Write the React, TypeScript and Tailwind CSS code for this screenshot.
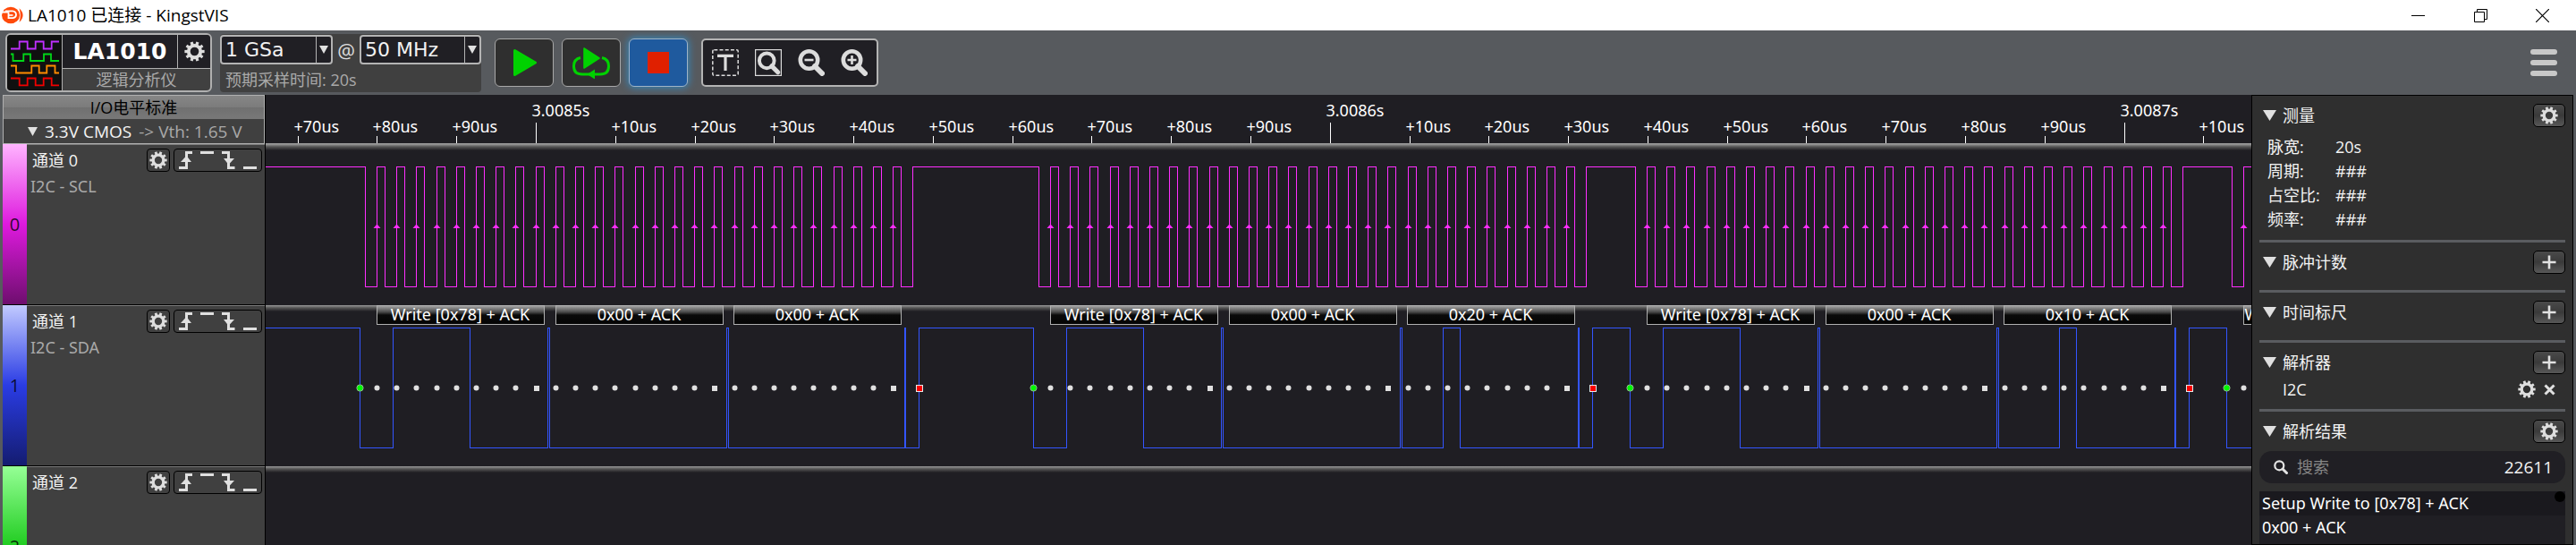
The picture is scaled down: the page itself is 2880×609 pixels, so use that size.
import React from "react";

const PLOT_LEFT = 297;
const HIGH = 25;
const LOW = 159;
const MID = 92;
const BIT = 22.2;
const px = (x: number) => Math.floor(x - PLOT_LEFT) + 0.5;

type Frame = { start: number; bytes: string[]; pulse?: [number, number]; clipped?: boolean };

const FRAMES: Frame[] = [
  { start: 421.5, bytes: ["Write [0x78] + ACK", "0x00 + ACK", "0x00 + ACK"] },
  { start: 1174.5, bytes: ["Write [0x78] + ACK", "0x00 + ACK", "0x20 + ACK"], pulse: [439, 458] },
  { start: 1841.5, bytes: ["Write [0x78] + ACK", "0x00 + ACK", "0x10 + ACK"], pulse: [461, 480] },
  { start: 2508.5, bytes: ["W"], clipped: true },
];

const BITS = Array.from({ length: 27 }, (_, i) => i);

function wave(edges: number[]) {
  let high = true;
  let d = `M0 ${HIGH + 0.5}`;
  for (const e of edges) {
    high = !high;
    d += `H${px(e)}V${(high ? HIGH : LOW) + 0.5}`;
  }
  return d + "H6000";
}

const sclEdges = FRAMES.flatMap(({ start }) => [
  start - 13,
  ...BITS.flatMap((i) => [start + i * BIT, start + i * BIT + 9]),
  start + 599.3,
]);

const sdaEdges = FRAMES.flatMap(({ start: s, pulse }) => [
  s - 19,
  s + 18,
  s + 104,
  s + 190.5,
  s + 192.5,
  s + 390.5,
  s + 392.5,
  ...(pulse ? [s + pulse[0], s + pulse[1]] : []),
  s + 590,
  s + 591,
  s + 606,
]);

function Gear({ className }: { className: string }) {
  return (
    <svg viewBox="-12 -12 24 24" className={className} aria-hidden="true">
      <circle r="7" fill="none" stroke="#dedede" strokeWidth="4" />
      {Array.from({ length: 10 }, (_, i) => (
        <rect key={i} x="-1.7" y="-11.6" width="3.4" height="4" fill="#dedede" transform={`rotate(${i * 36 + 18})`} />
      ))}
    </svg>
  );
}

function Plus() {
  return (
    <svg viewBox="0 0 16 16" className="size-4" aria-hidden="true">
      <path d="M8 0.5V15.5M0.5 8H15.5" stroke="#e2e2e2" strokeWidth="2.6" />
    </svg>
  );
}

function Magnifier({ sign }: { sign?: string }) {
  return (
    <g>
      <circle cx="12.5" cy="12" r="9.7" fill="none" stroke="#dcdcdc" strokeWidth="4.6" />
      <path d="M19 19L27 27" stroke="#dcdcdc" strokeWidth="6" strokeLinecap="round" />
      {sign && <path d={sign} stroke="#dcdcdc" strokeWidth="2.6" />}
    </g>
  );
}

function TitleBar() {
  return (
    <header className="flex h-[34px] shrink-0 items-center justify-between bg-white text-black">
      <div className="flex items-center gap-[5px] pl-[2px]">
        <svg viewBox="0 0 24 20" className="h-5 w-6" aria-hidden="true">
          <ellipse cx="10" cy="10" rx="10" ry="9.2" fill="#ff4a0a" />
          <path d="M19.5 2.2Q23.6 6 23.6 10T19.5 17.8Q22 10 19.5 2.2Z" fill="#ff4a0a" />
          <path d="M0 6.5H7.5M7.5 6.5V13.2H12.5Q16 12.6 16 9.6Q16 5.6 12 5.4H4" fill="none" stroke="#fff" strokeWidth="1.8" />
          <path d="M8 10H12.5" stroke="#fff" strokeWidth="1.6" />
        </svg>
        <h1 className="text-[19px] leading-6">LA1010 已连接 - KingstVIS</h1>
      </div>
      <div className="flex h-full">
        <button aria-label="最小化" className="flex w-[70px] items-center justify-center">
          <svg className="size-[15px]" viewBox="0 0 15 15"><path d="M0 7.5H15" stroke="#000" /></svg>
        </button>
        <button aria-label="还原" className="flex w-[70px] items-center justify-center">
          <svg className="size-[15px]" viewBox="0 0 15 15"><path d="M.5 3.5H11.5V14.5H.5ZM3.5 3.5V.5H14.5V11.5H11.5" fill="none" stroke="#000" /></svg>
        </button>
        <button aria-label="关闭" className="flex w-[72px] items-center justify-center pr-[3px]">
          <svg className="size-[15px]" viewBox="0 0 15 15"><path d="M0 0L15 15M15 0L0 15" stroke="#000" strokeWidth="1.2" /></svg>
        </button>
      </div>
    </header>
  );
}

function Drop({ label, options, className }: { label: string; options: string[]; className: string }) {
  return (
    <div className={`relative h-[33px] ${className}`}>
      <select
        aria-label={label}
        className="h-full w-full appearance-none rounded-[4px] border-2 border-[#b4b4b4] bg-[#201f24] pl-1 font-['DejaVu_Sans',sans-serif] text-[22px] leading-7 text-[#f2f2f2]"
      >
        {options.map((o) => <option key={o}>{o}</option>)}
      </select>
      <span className="pointer-events-none absolute inset-y-[2px] right-[2px] flex w-[17px] items-center justify-center border-l border-[#b4b4b4]">
        <svg viewBox="0 0 10 9" className="h-[9px] w-[10px]"><path d="M0 0H10L5 9Z" fill="#e0e0e0" /></svg>
      </span>
    </div>
  );
}

function Toolbar() {
  return (
    <div className="flex h-[72px] shrink-0 bg-[#575a5e] pl-[6px]">
      <div className="mt-[3px] flex h-[66px] w-[231px] overflow-hidden rounded-[6px] border-2 border-[#b0b0b0] bg-[#404040]">
        <svg viewBox="8 39 61 62" className="h-full w-[61px] shrink-0 bg-[#101010]" fill="none" strokeWidth="1.8" aria-hidden="true">
          <path d="M12 54.5H21.7V46.5H30.7V54.5H39.7V46.5H48.7V54.5H57.7V46.5H66" stroke="#c030ff" />
          <path d="M12 60.5H14.5V68H26.3V60.5H34V68H49V60.5H57V68H66" stroke="#00d818" />
          <path d="M12 73.5H18V81.5H35.3V73.5H43.7V81.5H52.3V73.5H61.5V81.5H66" stroke="#ff8c00" />
          <path d="M12 87.5H21.7V95.3H30.7V87.5H39.7V95.3H48.7V87.5H57.7V95.3H66" stroke="#f00000" />
        </svg>
        <div className="flex flex-1 flex-col border-l border-[#b0b0b0]">
          <div className="flex h-[38px] border-b border-[#b0b0b0] bg-[#201f24]">
            <button className="flex-1 text-center font-['DejaVu_Sans',sans-serif] text-[25px] leading-9 font-bold text-white">LA1010</button>
            <button aria-label="设备设置" className="flex w-[37px] items-center justify-center border-l border-[#b0b0b0]">
              <Gear className="size-[23px]" />
            </button>
          </div>
          <div className="flex flex-1 items-center justify-center text-[18px] leading-6 text-[#a9a9a9]">逻辑分析仪</div>
        </div>
      </div>

      <div className="mt-1 ml-[9px] h-[65px] w-[292px] rounded-[4px] bg-[#404040]">
        <div className="mt-px flex items-center justify-between">
          <Drop label="采样深度" options={["1 GSa", "500 MSa"]} className="w-[126px]" />
          <span className="text-[22px] leading-6 text-[#dcdcdc]">@</span>
          <Drop label="采样率" options={["50 MHz", "100 MHz"]} className="w-[136px]" />
        </div>
        <p className="mt-1 pl-[6px] text-[18px] leading-[26px] text-[#a9a9a9]">预期采样时间: 20s</p>
      </div>

      <div className="mt-[9px] ml-[15px] flex gap-[9px]">
        <button aria-label="开始采样" className="flex h-[54px] w-[66px] items-center justify-center rounded-[6px] border border-[#a8a8a8] bg-[#2f2f2f]">
          <svg viewBox="0 0 30 30" className="size-[30px]"><path d="M4.500 1.500L27.500 15L4.500 28.500Z" fill="#00d200" stroke="#00d200" strokeWidth="3" strokeLinejoin="round" /></svg>
        </button>
        <button aria-label="循环采样" className="flex h-[54px] w-[66px] items-center justify-center rounded-[6px] border border-[#a8a8a8] bg-[#2f2f2f]">
          <svg viewBox="0 0 44 36" className="h-9 w-11">
            <path d="M14 2L31 13L14 24Z" fill="#00d200" stroke="#00d200" strokeWidth="1.6" strokeLinejoin="round" />
            <path d="M10 12.500Q2.500 14 2.500 22Q2.500 31 12 31H32Q41.500 31 41.500 22Q41.500 14 34 12.500" fill="none" stroke="#00d200" strokeWidth="3" />
            <path d="M17.500 31L26 25.500V36.500Z" fill="#00d200" />
          </svg>
        </button>
        <button aria-label="停止采样" className="flex h-[54px] w-[66px] items-center justify-center rounded-[6px] border border-[#9fb4c8] bg-[#1f5a9e] shadow-[0_0_9px_1px_#3487bd]">
          <svg viewBox="0 0 24 24" className="size-6"><path d="M0 0H24V24H0Z" fill="#e02000" /></svg>
        </button>
      </div>

      <div className="mt-[9px] ml-[15px] flex h-[54px] items-center gap-[18px] rounded-[5px] border-2 border-[#b4b4b4] bg-[#201f24] px-[10px]">
        <button aria-label="文字标注">
          <svg viewBox="0 0 30 30" className="size-[30px]" fill="none">
            <rect x=".8" y=".8" width="28.400" height="28.400" rx="1.500" stroke="#dcdcdc" strokeWidth="1.500" strokeDasharray="4 2.200" />
            <path d="M6 7.300H24M15 7V24" stroke="#dcdcdc" strokeWidth="3.200" />
          </svg>
        </button>
        <button aria-label="适合窗口">
          <svg viewBox="0 0 30 30" className="size-[30px]">
            <rect x=".6" y=".6" width="28.800" height="28.800" fill="none" stroke="#dcdcdc" strokeWidth="1.200" />
            <g transform="translate(2.500 2.500) scale(.86)"><Magnifier /></g>
          </svg>
        </button>
        <button aria-label="缩小">
          <svg viewBox="0 0 30 30" className="size-[30px]"><Magnifier sign="M7.500 12H17.500" /></svg>
        </button>
        <button aria-label="放大">
          <svg viewBox="0 0 30 30" className="size-[30px]"><Magnifier sign="M7.500 12H17.500M12.500 7V17" /></svg>
        </button>
      </div>

      <button aria-label="菜单" className="mt-5 mr-[21px] ml-auto flex h-8 w-[30px] flex-col justify-center gap-[6px]">
        <span className="h-[6px] w-full rounded-full bg-[#c8c8c8]" />
        <span className="h-[6px] w-full rounded-full bg-[#c8c8c8]" />
        <span className="h-[6px] w-full rounded-full bg-[#c8c8c8]" />
      </button>
    </div>
  );
}

const STRIPS = [
  "bg-[linear-gradient(#ffb4ff,#de1ade_50%,#6e0e6e)]",
  "bg-[linear-gradient(#c2caff,#2a3ce4_50%,#141c70)]",
  "bg-[linear-gradient(#96ff96,#20cc20_50%,#0e660e)]",
];
const CHANNEL_NOTES = ["I2C - SCL", "I2C - SDA", ""];

function Channel({ index }: { index: number }) {
  return (
    <section className="flex h-[180px] shrink-0 border-b border-black bg-[#404040]">
      <div className={`flex w-[27px] items-center justify-center text-[20px] leading-6 text-black/80 ${STRIPS[index]}`}>{index}</div>
      <div className="flex flex-1 flex-col border-t border-[#7c7c7c] pr-[3px]">
        <div className="mt-1 flex h-[26px] items-center gap-1 pl-[6px]">
          <h2 className="flex-1 text-[18px] leading-6 text-[#f4f4f4]">通道 {index}</h2>
          <button aria-label={`通道 ${index} 设置`} className="flex size-[26px] items-center justify-center rounded-[4px] border border-black">
            <Gear className="size-5" />
          </button>
          <div className="flex h-[26px] items-center rounded-[4px] border border-black pl-px">
            {[
              ["上升沿", "M4 20.500H12.500V3.500H19"],
              ["高电平", "M4 3.500H19"],
              ["下降沿", "M4 3.500H11.500V20.500H18.500"],
              ["低电平", "M4 20.500H19"],
            ].map(([name, d], i) => (
              <button key={name} aria-label={`${name}触发`}>
                <svg viewBox="0 0 24 24" className="size-6">
                  <path d={d} fill="none" stroke="#e0e0e0" strokeWidth="3" />
                  {i === 0 && <path d="M6 14L12.500 7L18 14Z" fill="#e0e0e0" />}
                  {i === 2 && <path d="M6 10L11.500 17L18 10Z" fill="#e0e0e0" />}
                </svg>
              </button>
            ))}
          </div>
        </div>
        <p className="mt-1 pl-1 font-['Noto_Sans',sans-serif] text-[18px] leading-6 text-[#a9a9a9]">{CHANNEL_NOTES[index]}</p>
      </div>
    </section>
  );
}

function ChannelPanel() {
  return (
    <aside className="flex w-[294px] shrink-0 flex-col overflow-hidden border-r border-black">
      <div className="h-[55px] shrink-0 border border-[#b0b0b0]">
        <div className="flex h-[26px] items-center justify-center bg-[linear-gradient(#868686,#7c7c7c_48%,#707070_50%,#787878)] text-[18px] leading-6 text-black">I/O电平标准</div>
        <button className="flex h-[27px] w-full items-center gap-2 bg-[#404040] pl-[27px] text-[19px] leading-6">
          <svg viewBox="0 0 11 10" className="h-[10px] w-[11px]"><path d="M0 0H11L5.500 10Z" fill="#e0e0e0" /></svg>
          <span className="text-[#f4f4f4]">3.3V CMOS</span>
          <span className="text-[#a9a9a9]">-&gt; Vth: 1.65 V</span>
        </button>
      </div>
      <Channel index={0} />
      <Channel index={1} />
      <Channel index={2} />
    </aside>
  );
}

function Ruler() {
  const ticks = Array.from({ length: 25 }, (_, i) => i - 3);
  return (
    <svg className="block h-[55px] w-full shrink-0 border-b border-[#999] font-['Noto_Sans',sans-serif] text-[18px]" fill="#fff">
      {ticks.map((t) => {
        const x = px(599.5 + t * 88.78);
        const step = ((t % 10) + 10) % 10;
        const major = step === 0;
        return (
          <g key={t}>
            <path d={`M${x} ${major ? 31 : 46}V54`} stroke="#fff" shapeRendering="crispEdges" />
            <text x={x - 5} y={major ? 24 : 42}>
              {major ? `3.008${5 + t / 10}s` : `+${step}0us`}
            </text>
          </g>
        );
      })}
    </svg>
  );
}

const LANE = "block h-[180px] w-full shrink-0 overflow-visible bg-[linear-gradient(#999_0px,#555_3px,#1f1e23_7px)]";

function SclLane() {
  return (
    <svg className={LANE}>
      <path d={wave(sclEdges)} fill="none" stroke="#ff2eff" shapeRendering="crispEdges" />
      {FRAMES.flatMap((f) =>
        BITS.map((i) => {
          const x = px(f.start + i * BIT);
          return <path key={`${f.start}-${i}`} d={`M${x - 4} ${MID + 2}L${x} ${MID - 2.5}L${x + 4} ${MID + 2}Z`} fill="#ff2eff" />;
        }),
      )}
    </svg>
  );
}

function SdaLane() {
  return (
    <svg className={`${LANE} font-['Noto_Sans',sans-serif] text-[18px]`}>
      <defs>
        <linearGradient id="note" x1="0" y1="0" x2="0" y2="1">
          <stop offset="0" stopColor="#a8a8a8" />
          <stop offset=".35" stopColor="#484848" />
          <stop offset=".5" stopColor="#0a0a0a" />
          <stop offset="1" stopColor="#040404" />
        </linearGradient>
      </defs>
      <path d={wave(sdaEdges)} fill="none" stroke="#3355ff" shapeRendering="crispEdges" />
      {FRAMES.map((f) => {
        const centre = MID + 0.5;
        const begin = px(f.start - 19);
        const end = px(f.start + 606);
        return (
          <g key={f.start}>
            {f.bytes.map((text, b) => {
              const x = px(f.start + b * 199.7);
              return (
                <g key={b}>
                  <rect x={x} y=".5" width="187" height="21" fill="url(#note)" stroke="#b0b0b0" shapeRendering="crispEdges" />
                  <text x={f.clipped ? x + 1 : x + 93} y="17" fill="#fff" textAnchor={f.clipped ? "start" : "middle"}>{text}</text>
                </g>
              );
            })}
            {BITS.map((i) => {
              const x = px(f.start + i * BIT);
              return i % 9 === 8 ? (
                <rect key={i} x={x - 2.5} y={centre - 2.5} width="6" height="6" fill="#e0e0e0" />
              ) : (
                <circle key={i} cx={x} cy={centre} r="3" fill="#e0e0e0" />
              );
            })}
            <circle cx={begin} cy={centre} r="3.6" fill="#00f800" stroke="#8fbf8f" />
            <rect x={end - 3} y={centre - 3} width="7" height="7" fill="#f80000" stroke="#e8e8e8" />
          </g>
        );
      })}
    </svg>
  );
}

const PANEL_BUTTON =
  "flex h-[26px] w-9 items-center justify-center rounded-[5px] border border-black bg-[linear-gradient(#4a4a4a,#3a3a3a_50%,#585858)]";

function Section({ title, gear, last, children }: { title: string; gear?: boolean; last?: boolean; children?: React.ReactNode }) {
  return (
    <section className={last ? "pt-[9px]" : "border-b-[3px] border-[#5a5c60] pt-[9px] pb-[9px]"}>
      <div className="flex h-[26px] items-center pl-1">
        <svg viewBox="0 0 15 12" className="h-3 w-[15px]"><path d="M0 0H15L7.500 12Z" fill="#e0e0e0" /></svg>
        <h2 className="ml-[7px] flex-1 text-[18px] leading-6">{title}</h2>
        <button aria-label={gear ? `${title}设置` : `添加${title}`} className={PANEL_BUTTON}>
          {gear ? <Gear className="size-5" /> : <Plus />}
        </button>
      </div>
      {children ?? <div className="h-[9px]" />}
    </section>
  );
}

const MEASURES = [
  ["脉宽:", "20s"],
  ["周期:", "###"],
  ["占空比:", "###"],
  ["频率:", "###"],
];
const RESULTS = ["Setup Write to [0x78] + ACK", "0x00 + ACK", "0x00 + ACK"];

function SidePanel() {
  return (
    <aside className="mr-[3px] flex w-[360px] shrink-0 flex-col overflow-hidden border border-black bg-[#2f2f2f] px-2 text-[18px] leading-6 text-[#f4f4f4]">
      <Section title="测量" gear>
        <dl className="mt-[9px] grid grid-cols-[76px_1fr] pl-[9px] leading-[27px]">
          {MEASURES.map(([k, v]) => (
            <React.Fragment key={k}>
              <dt>{k}</dt>
              <dd>{v}</dd>
            </React.Fragment>
          ))}
        </dl>
      </Section>
      <Section title="脉冲计数" />
      <Section title="时间标尺" />
      <Section title="解析器">
        <div className="mt-1 flex h-[26px] items-center pr-[11px] pl-[26px]">
          <span className="flex-1">I2C</span>
          <button aria-label="I2C 设置"><Gear className="size-5" /></button>
          <button aria-label="移除 I2C" className="ml-[9px]">
            <svg viewBox="0 0 13 13" className="size-[13px]"><path d="M1.500 1.500L11.500 11.500M11.500 1.500L1.500 11.500" stroke="#e0e0e0" strokeWidth="3" /></svg>
          </button>
        </div>
      </Section>
      <Section title="解析结果" gear last>
        <label className="mt-[9px] flex h-9 items-center rounded-[14px] bg-[#201f24] pr-[14px] pl-4">
          <svg viewBox="0 0 16 16" className="size-4"><circle cx="6.300" cy="6.300" r="5" fill="none" stroke="#e4e4e4" strokeWidth="2.200" /><path d="M10 10L14.500 14.500" stroke="#e4e4e4" strokeWidth="3" strokeLinecap="round" /></svg>
          <input aria-label="搜索" placeholder="搜索" className="ml-[10px] min-w-0 flex-1 bg-transparent text-[18px] outline-none placeholder:text-[#858585]" />
          <span className="text-[19px]">22611</span>
        </label>
        <ul className="relative mt-[9px] h-[90px] bg-[#201f24] font-['Noto_Sans',sans-serif] leading-[27px] text-white">
          {RESULTS.map((r, i) => (
            <li key={i} className={i === 0 ? "h-[27px] bg-[#1a191e] pl-[3px]" : "h-[27px] pl-[3px]"}>{r}</li>
          ))}
          <li aria-hidden="true" className="absolute top-0 right-0 size-3 rounded-full bg-black" />
        </ul>
      </Section>
    </aside>
  );
}

export default function App() {
  return (
    <div className="flex h-screen w-full flex-col overflow-hidden bg-[#575a5e] font-['Open_Sans','Noto_Sans_CJK_SC',sans-serif]">
      <TitleBar />
      <Toolbar />
      <main className="flex min-h-0 flex-1 pl-[3px]">
        <ChannelPanel />
        <div className="flex min-w-0 flex-1 flex-col overflow-hidden bg-[#1f1e23]">
          <Ruler />
          <SclLane />
          <SdaLane />
          <svg className={LANE} aria-hidden="true" />
        </div>
        <SidePanel />
      </main>
    </div>
  );
}
